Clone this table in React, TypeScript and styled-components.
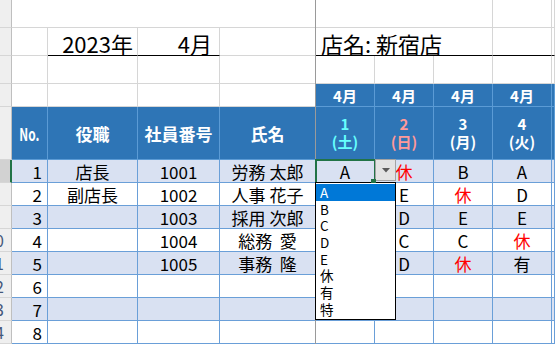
import styled, { createGlobalStyle, css } from "styled-components"

const FONT = `"Noto Sans CJK JP", "Noto Sans", sans-serif`

const GlobalStyle = createGlobalStyle`
    html, body {
        margin: 0;
        padding: 0;
        background: #ffffff;
    }
    body {
        font-family: ${FONT};
    }
`

type Tone = "blank" | "head" | "odd" | "even"

const tones = {
    blank: css`
        background: #ffffff;
        border-right: 1px solid #d6d6d6;
        border-bottom: 1px solid #d6d6d6;
    `,
    head: css`
        background: #2e75b6;
        color: #ffffff;
        font-weight: 700;
        border-right: 1px solid #5b9bd5;
        border-bottom: 1px solid #5b9bd5;
    `,
    odd: css`
        background: #d9e1f2;
        border-right: 1px solid #6a9fd8;
        border-bottom: 1px solid #6a9fd8;
    `,
    even: css`
        background: #ffffff;
        border-right: 1px solid #6a9fd8;
        border-bottom: 1px solid #6a9fd8;
    `,
}

const Sheet = styled.div`
    position: relative;
    width: 555px;
    height: 344px;
    overflow: hidden;
    display: grid;
    grid-template-columns: 12px 36px 90px 82px 96px 59px 59px 59px 59px 1fr;
    grid-template-rows: 28px 28px 28px 23px 53px repeat(8, 23px);
    font-family: ${FONT};
    color: #000000;
`

interface CellProps {
    $tone?: Tone
    $align?: "left" | "center" | "right"
    $span?: number
    $under?: boolean
    $ink?: string
    $selected?: boolean
}

const Cell = styled.div<CellProps>`
    box-sizing: border-box;
    display: flex;
    align-items: center;
    justify-content: ${(p) =>
        p.$align === "left" ? "flex-start" : p.$align === "right" ? "flex-end" : "center"};
    grid-column: span ${(p) => p.$span ?? 1};
    min-width: 0;
    white-space: pre;
    font-size: 17px;
    line-height: 1;
    ${(p) => tones[p.$tone ?? "blank"]}
    ${(p) =>
        p.$under &&
        css`
            border-bottom-color: #000000;
        `}
    ${(p) =>
        p.$ink &&
        css`
            color: ${p.$ink};
        `}
    ${(p) =>
        p.$selected &&
        css`
            position: relative;
            z-index: 3;
            outline: 2px solid #217346;
            outline-offset: -1px;
        `}
`

const TitleText = styled.span<{ $pad: number }>`
    font-size: 22px;
    padding: 3px ${(p) => p.$pad}px 0 5px;
`

const HeadLabel = styled.span`
    font-size: 17px;
`

const NoLabel = styled.span`
    display: inline-block;
    font-size: 17px;
    transform: scaleX(0.7);
`

const MonthLabel = styled.span`
    font-size: 15px;
`

const DateStack = styled.div<{ $ink?: string }>`
    display: flex;
    flex-direction: column;
    align-items: center;
    font-size: 15px;
    line-height: 18px;
    color: ${(p) => p.$ink ?? "#ffffff"};
`

const NumText = styled.span`
    padding-right: 5px;
`

const RowHead = styled.div<{ $selected?: boolean }>`
    box-sizing: border-box;
    display: flex;
    align-items: center;
    justify-content: flex-end;
    padding-right: 6px;
    overflow: hidden;
    background: ${(p) => (p.$selected ? "#d2d2d2" : "#efefef")};
    border-right: ${(p) => (p.$selected ? "2px solid #217346" : "1px solid #bfbfbf")};
    border-bottom: 1px solid #d6d6d6;
    color: #44577a;
    font-size: 16px;
`

const RowNum = styled.span`
    flex: 0 0 20px;
    text-align: center;
`

const FreezeLine = styled.div`
    position: absolute;
    left: 315px;
    top: 0;
    bottom: 0;
    width: 1px;
    background: #9a9a9a;
    z-index: 2;
`

const FillHandle = styled.div`
    position: absolute;
    left: 371px;
    top: 179px;
    width: 5px;
    height: 4px;
    background: #217346;
    z-index: 5;
`

const DropButton = styled.div`
    position: absolute;
    left: 375px;
    top: 159px;
    width: 21px;
    height: 22px;
    box-sizing: border-box;
    border: 1px solid #a3a3a3;
    background: #e3e3e3;
    display: flex;
    align-items: center;
    justify-content: center;
    z-index: 4;
`

const DropList = styled.ul`
    position: absolute;
    left: 315px;
    top: 182px;
    width: 81px;
    height: 138px;
    box-sizing: border-box;
    margin: 0;
    padding: 1px 0 0;
    list-style: none;
    border: 1px solid #000000;
    background: #ffffff;
    z-index: 4;
    font-family: ${FONT};
    font-size: 13.5px;
`

const DropItem = styled.li<{ $active?: boolean }>`
    height: 16.7px;
    line-height: 16.7px;
    padding-left: 4px;
    background: ${(p) => (p.$active ? "#0078d7" : "transparent")};
    color: ${(p) => (p.$active ? "#ffffff" : "#000000")};
`

const RED = "#ff0000"

const dates = [
    { day: "1", week: "土", ink: "#66ffff" },
    { day: "2", week: "日", ink: "#ff9999" },
    { day: "3", week: "月" },
    { day: "4", week: "火" },
]

const staff = [
    { role: "店長", id: "1001", name: "労務 太郎", shifts: ["A", "休", "B", "A"] },
    { role: "副店長", id: "1002", name: "人事 花子", shifts: ["", "E", "休", "D"] },
    { role: "", id: "1003", name: "採用 次郎", shifts: ["", "D", "E", "E"] },
    { role: "", id: "1004", name: "総務  愛", shifts: ["", "C", "C", "休"] },
    { role: "", id: "1005", name: "事務  隆", shifts: ["", "D", "休", "有"] },
    { role: "", id: "", name: "", shifts: ["", "", "", ""] },
    { role: "", id: "", name: "", shifts: ["", "", "", ""] },
    { role: "", id: "", name: "", shifts: ["", "", "", ""] },
]

const options = ["A", "B", "C", "D", "E", "休", "有", "特"]

export default function App() {
    return (
        <>
            <GlobalStyle />
            <Sheet>
                {/* row 1 */}
                <RowHead />
                <Cell $span={4} />
                <Cell $span={3} />
                <Cell />
                <Cell />

                {/* row 2: year / month / store */}
                <RowHead />
                <Cell />
                <Cell $align="right" $under>
                    <TitleText $pad={4}>2023年</TitleText>
                </Cell>
                <Cell $align="right" $under>
                    <TitleText $pad={7}>4月</TitleText>
                </Cell>
                <Cell />
                <Cell $span={3} $align="left" $under>
                    <TitleText $pad={0}>店名: 新宿店</TitleText>
                </Cell>
                <Cell $under />
                <Cell $under />

                {/* row 3 */}
                <RowHead />
                {Array.from({ length: 9 }, (_, i) => (
                    <Cell key={i} />
                ))}

                {/* row 4: months */}
                <RowHead />
                <Cell />
                <Cell />
                <Cell />
                <Cell />
                {dates.map((d) => (
                    <Cell key={d.day} $tone="head">
                        <MonthLabel>4月</MonthLabel>
                    </Cell>
                ))}
                <Cell $tone="head" />

                {/* row 5: header */}
                <RowHead />
                <Cell $tone="head">
                    <NoLabel>No.</NoLabel>
                </Cell>
                <Cell $tone="head">
                    <HeadLabel>役職</HeadLabel>
                </Cell>
                <Cell $tone="head">
                    <HeadLabel>社員番号</HeadLabel>
                </Cell>
                <Cell $tone="head">
                    <HeadLabel>氏名</HeadLabel>
                </Cell>
                {dates.map((d) => (
                    <Cell key={d.day} $tone="head">
                        <DateStack $ink={d.ink}>
                            <span>{d.day}</span>
                            <span>({d.week})</span>
                        </DateStack>
                    </Cell>
                ))}
                <Cell $tone="head" />

                {/* staff rows */}
                {staff.map((s, i) => {
                    const tone: Tone = i % 2 === 0 ? "odd" : "even"
                    return [
                        <RowHead key={`h${i}`} $selected={i === 0}>
                            <RowNum>{i + 7}</RowNum>
                        </RowHead>,
                        <Cell key={`n${i}`} $tone={tone} $align="right">
                            <NumText>{i + 1}</NumText>
                        </Cell>,
                        <Cell key={`r${i}`} $tone={tone}>
                            {s.role}
                        </Cell>,
                        <Cell key={`i${i}`} $tone={tone}>
                            {s.id}
                        </Cell>,
                        <Cell key={`m${i}`} $tone={tone}>
                            {s.name}
                        </Cell>,
                        ...s.shifts.map((v, j) => (
                            <Cell
                                key={`s${i}-${j}`}
                                $tone={tone}
                                $ink={v === "休" ? RED : undefined}
                                $selected={i === 0 && j === 0}
                            >
                                {v}
                            </Cell>
                        )),
                        <Cell key={`x${i}`} $tone={tone} />,
                    ]
                })}

                <FreezeLine />
                <FillHandle />
                <DropButton>
                    <svg width="8" height="5" viewBox="0 0 8 5">
                        <path d="M0 0 H8 L4 4.5 Z" fill="#5a5a5a" />
                    </svg>
                </DropButton>
                <DropList>
                    {options.map((o, i) => (
                        <DropItem key={o} $active={i === 0}>
                            {o}
                        </DropItem>
                    ))}
                </DropList>
            </Sheet>
        </>
    )
}
